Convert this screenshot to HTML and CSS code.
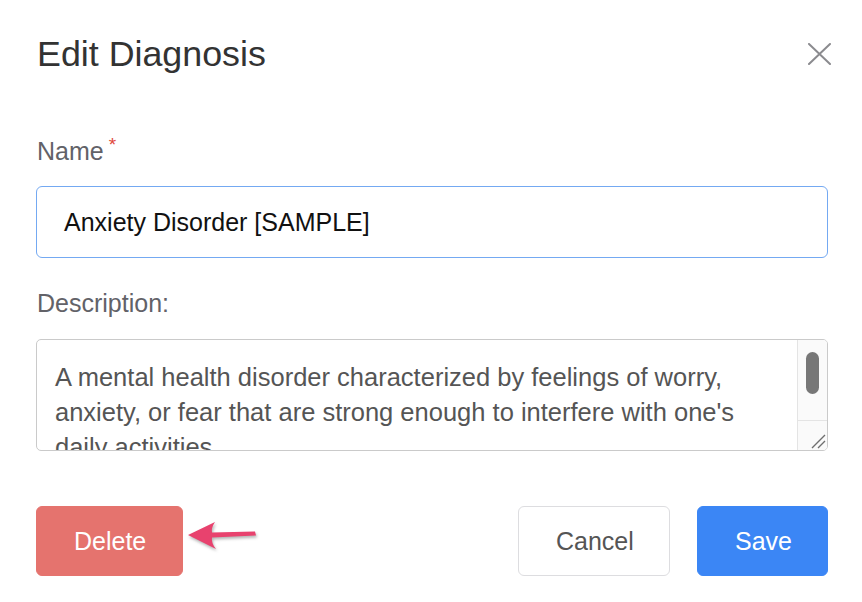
FILE: index.html
```html
<!DOCTYPE html>
<html lang="en">
<head>
<meta charset="utf-8">
<title>Edit Diagnosis</title>
<link rel="stylesheet" href="styles.css">
</head>
<body>
<div class="modal">
  <div class="modal-header">
    <h1 class="modal-title">Edit Diagnosis</h1>
    <button class="close-btn" aria-label="Close">
      <svg width="24" height="22" viewBox="0 0 24 22"><path d="M2 1 L23 21 M23 1 L2 21" stroke="#8b8b8f" stroke-width="2" fill="none" stroke-linecap="round"/></svg>
    </button>
  </div>

  <label class="field-label label-name">Name<span class="required">*</span></label>
  <div class="text-input">Anxiety Disorder [SAMPLE]</div>

  <label class="field-label label-desc">Description:</label>
  <div class="textarea">
    <div class="textarea-text">A mental health disorder characterized by feelings of worry, anxiety, or fear that are strong enough to interfere with one's daily activities.</div>
    <div class="scrollbar">
      <div class="scroll-track"><div class="scroll-thumb"></div></div>
      <div class="resizer">
        <svg width="16" height="16" viewBox="0 0 16 16"><path d="M2 15 L15 2 M8 15 L15 8" stroke="#6f6f6f" stroke-width="1.4" fill="none"/></svg>
      </div>
    </div>
  </div>

  <div class="modal-footer">
    <div class="footer-left">
      <button class="btn btn-delete">Delete</button>
      <svg class="pointer-arrow" width="80" height="45" viewBox="0 0 80 45"><path d="M4 20 L31 7 Q27 13 28 17.5 L71 16.5 L72 20.5 L28 22.5 Q27 28 32 34 Z" fill="#e8426e"/></svg>
    </div>
    <div class="footer-right">
      <button class="btn btn-cancel">Cancel</button>
      <button class="btn btn-save">Save</button>
    </div>
  </div>
</div>
</body>
</html>
```

FILE: styles.css
```css
* { box-sizing: border-box; }
html, body { margin: 0; padding: 0; background: #fff; }
body {
  font-family: "Liberation Sans", Arial, Helvetica, sans-serif;
  width: 862px;
  height: 602px;
  overflow: hidden;
}
.modal {
  padding: 34px 34px 0 36px;
  display: flex;
  flex-direction: column;
}
.modal-header {
  display: flex;
  justify-content: space-between;
  align-items: center;
  height: 40px;
}
.modal-title {
  margin: 0 0 0 1px;
  font-size: 35.8px;
  line-height: 40px;
  font-weight: normal;
  color: #333;
}
.close-btn {
  border: 0;
  background: none;
  padding: 0;
  margin-right: -3px;
  width: 24px;
  height: 22px;
  display: flex;
}
.field-label {
  display: block;
  font-size: 25px;
  line-height: 28px;
  color: #626268;
  margin-left: 1px;
}
.label-name { margin-top: 63px; }
.required {
  color: #e0483c;
  font-size: 19px;
  line-height: 19px;
  vertical-align: top;
  margin-left: 5px;
  position: relative;
  top: -2px;
}
.text-input {
  margin-top: 21px;
  height: 72px;
  border: 1px solid #74a9f2;
  border-radius: 6px;
  padding: 0 27px;
  display: flex;
  align-items: center;
  font-size: 25px;
  color: #111;
}
.label-desc { margin-top: 31px; }
.textarea {
  margin-top: 22px;
  height: 112px;
  border: 1px solid #cacaca;
  border-radius: 5px;
  display: flex;
  overflow: hidden;
}
.textarea-text {
  flex: 1;
  padding: 20px 8px 0 18px;
  font-size: 25.5px;
  line-height: 35px;
  color: #555;
  overflow: hidden;
}
.scrollbar {
  width: 30px;
  border-left: 1px solid #e4e4e4;
  background: #fafafa;
  display: flex;
  flex-direction: column;
}
.scroll-track {
  flex: 1;
  padding: 12px 8px 0 8px;
  border-bottom: 1px solid #e4e4e4;
}
.scroll-thumb {
  width: 13px;
  height: 42px;
  border-radius: 7px;
  background: #777;
}
.resizer {
  height: 29px;
  display: flex;
  justify-content: flex-end;
  align-items: flex-end;
  padding: 0 1px 1px 0;
}
.modal-footer {
  margin-top: 55px;
  display: flex;
  justify-content: space-between;
}
.footer-left { position: relative; }
.footer-right { display: flex; gap: 27px; }
.btn {
  font-family: "Liberation Sans", Arial, Helvetica, sans-serif;
  height: 70px;
  padding: 0 37px;
  font-size: 25px;
  border-radius: 6px;
  border: 1px solid transparent;
  cursor: pointer;
}
.btn-delete { background: #e5736e; color: #fff; border-color: #e5736e; width: 147px; }
.btn-cancel { background: #fff; color: #555; border-color: #dddde0; width: 152px; }
.btn-save { background: #3b86f5; color: #fff; border-color: #3b86f5; width: 131px; }
.pointer-arrow {
  position: absolute;
  left: 148px;
  top: 9px;
  filter: drop-shadow(1px 2px 1.5px rgba(0,0,0,0.3));
}
```
